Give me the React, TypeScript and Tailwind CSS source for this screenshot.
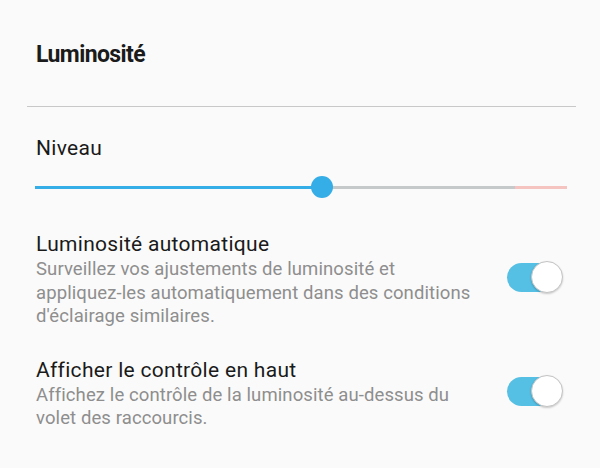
const Toggle = () => (
  <div className="relative w-[56px] h-[32px] shrink-0">
    <div className="absolute left-0 top-[1.5px] h-[29px] w-[50px] rounded-full bg-[#56bfe4]" />
    <div className="absolute right-0 top-0 w-[32px] h-[32px] rounded-full bg-white border border-[#c4c4c4] shadow-[0_1px_2px_rgba(0,0,0,0.2)]" />
  </div>
);

const SettingRow = ({ title, desc, className }: { title: string; desc: string; className?: string }) => (
  <div className={`flex items-center justify-between pr-[37px] ${className ?? ''}`}>
    <div className="w-[442px]">
      <div className="text-[21px] leading-[28px] tracking-[0.3px] text-[#1a1a1a]">{title}</div>
      <div className="text-[18.5px] leading-[23.5px] tracking-[0.1px] text-[#8e8e8e]">{desc}</div>
    </div>
    <div className="mb-[4px]">
      <Toggle />
    </div>
  </div>
);

export default function App() {
  return (
    <div className="w-[600px] h-[468px] bg-[#fafafa] font-['Roboto',sans-serif] overflow-hidden">
      <div className="pl-[36px] pt-[41px]">
        <h1 className="text-[23px] leading-[28px] font-bold tracking-[-0.6px] text-[#1b1b1b]">Luminosité</h1>
      </div>
      <div className="mt-[37px] ml-[27px] mr-[24px] h-px bg-[#c8c8c8]" />

      <div className="pl-[36px]">
        <div className="mt-[27px] text-[21px] leading-[28px] tracking-[0.3px] text-[#1a1a1a]">Niveau</div>

        {/* slider */}
        <div className="relative mt-[14px] -ml-px w-[532px] h-[22px] flex items-center">
          <div className="h-[3px] w-[287px] bg-[#35ade6]" />
          <div className="h-[3px] w-[193px] bg-[#c5c9ca]" />
          <div className="h-[3px] w-[52px] bg-[#f5c3c0]" />
          <div className="absolute left-[276px] top-0 w-[22px] h-[22px] rounded-full bg-[#35ade6]" />
        </div>

        <SettingRow
          className="mt-[32px]"
          title="Luminosité automatique"
          desc="Surveillez vos ajustements de luminosité et appliquez-les automatiquement dans des conditions d'éclairage similaires."
        />
        <SettingRow
          className="mt-[27px]"
          title="Afficher le contrôle en haut"
          desc="Affichez le contrôle de la luminosité au-dessus du volet des raccourcis."
        />
      </div>
    </div>
  );
}
